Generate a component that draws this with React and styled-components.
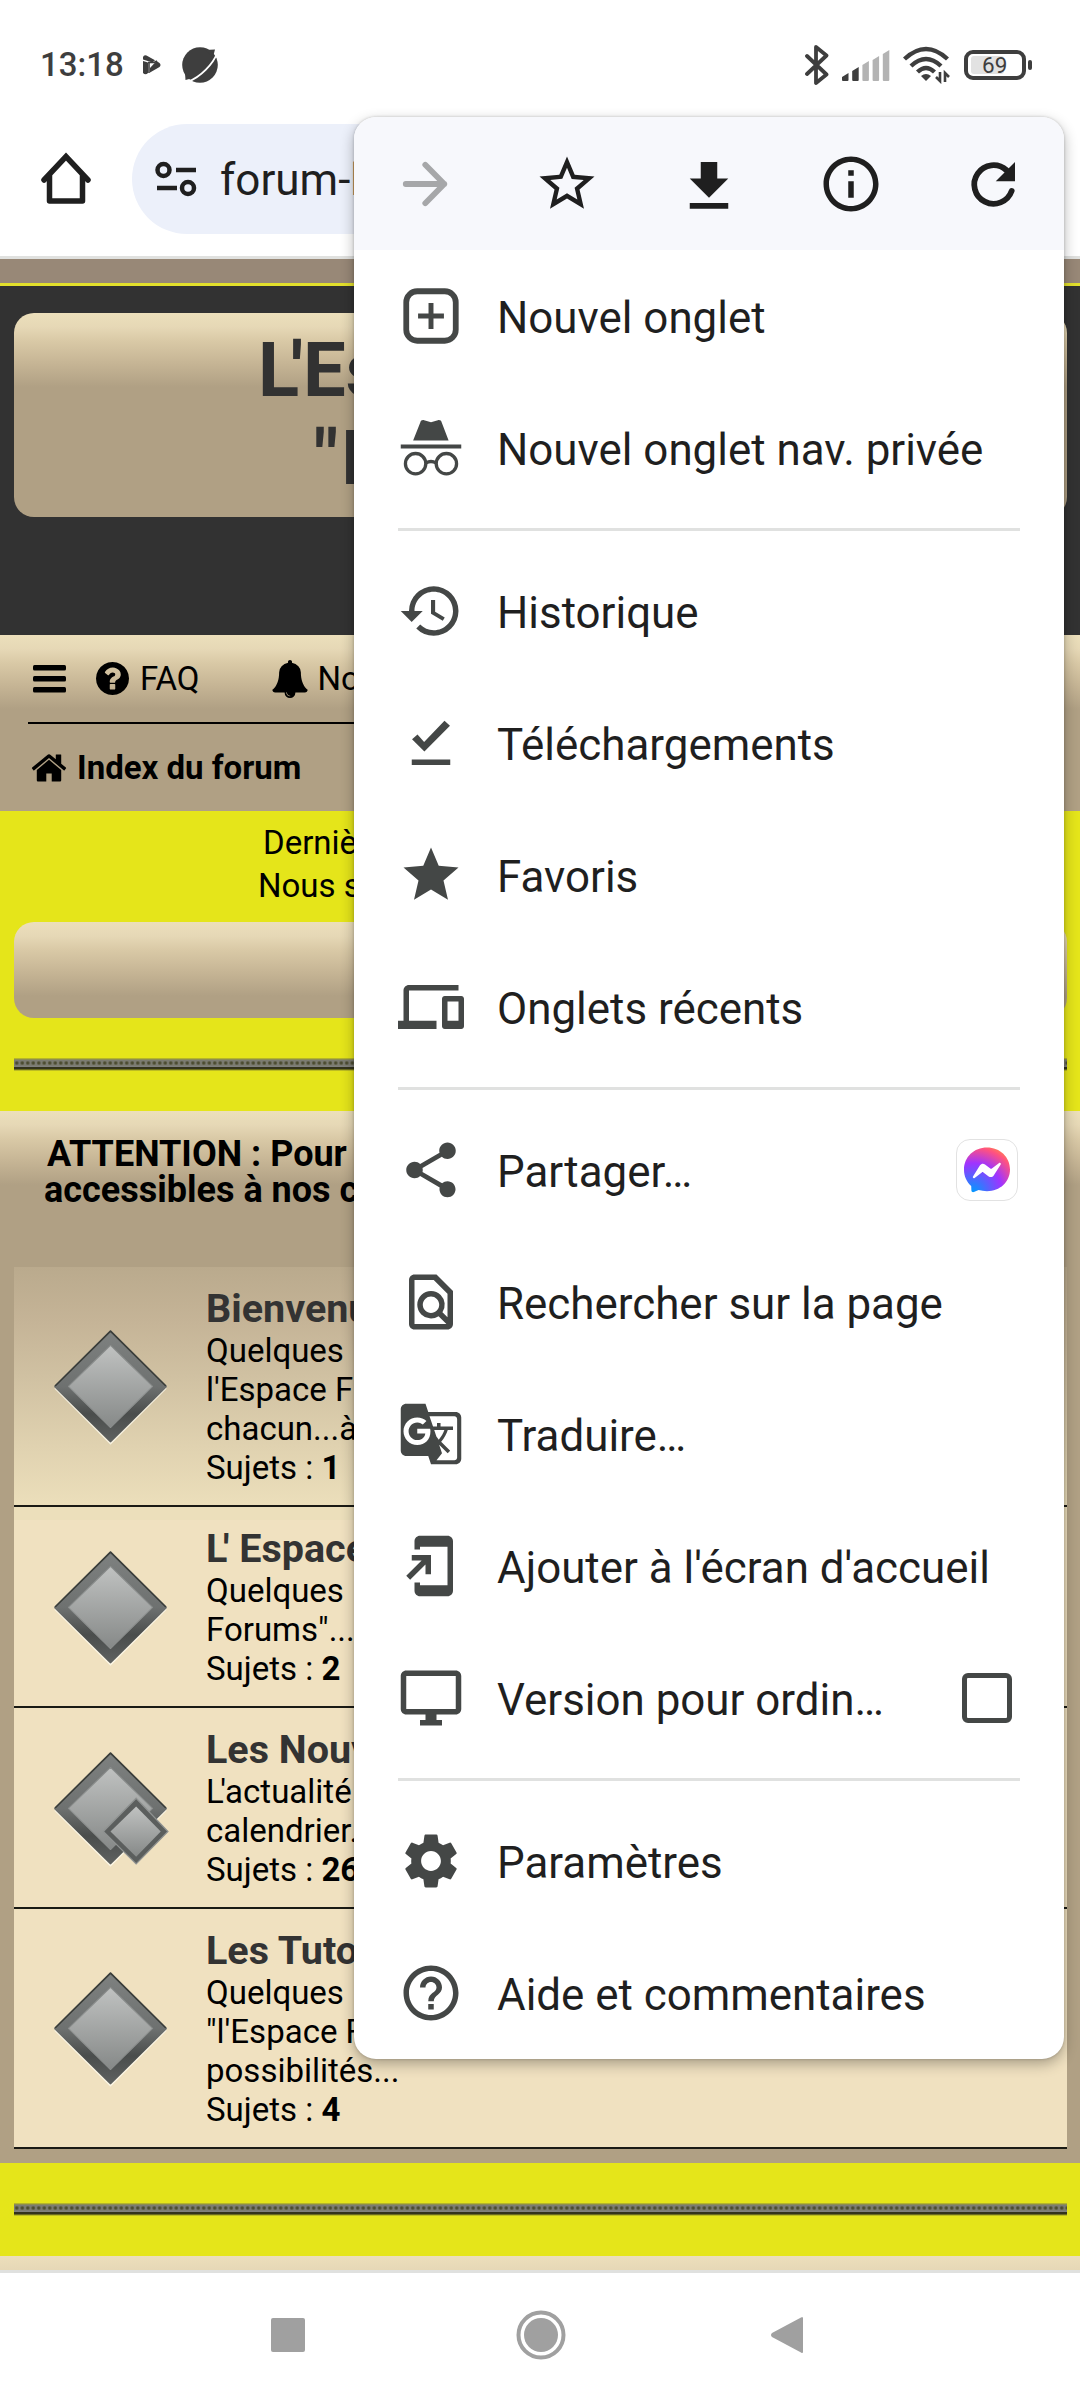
import React from "react";
import styled, { createGlobalStyle } from "styled-components";
import {
  MdAddToHomeScreen,
  MdDevices,
  MdGTranslate,
  MdHelpOutline,
  MdHistory,
  MdInfoOutline,
  MdOutlineDesktopWindows,
  MdOutlineFindInPage,
  MdSettings,
  MdShare,
  MdStar,
  MdStarOutline
} from "react-icons/md";

const GlobalStyle = createGlobalStyle`
  * {
    box-sizing: border-box;
  }
  body {
    margin: 0;
    background: #fff;
    font-family: Roboto, "Liberation Sans", sans-serif;
  }
  svg {
    display: block;
    flex: none;
  }
`;

const sheen = `linear-gradient(
  #ecdfbb 0,
  #e6d8b6 14px,
  #d9c9a6 28px,
  #c6b595 50px,
  #b0a084 74px,
  #b0a084 100%
)`;

const Screen = styled.div`
  position: relative;
  display: flex;
  flex-direction: column;
  width: 1080px;
  height: 2400px;
  overflow: hidden;
  background: #fff;
`;

/* ---- android status bar ---- */

const StatusBar = styled.div`
  display: flex;
  align-items: center;
  height: 108px;
  padding: 21px 48px 0 40px;
  color: #3e3e3e;
`;

const Clock = styled.span`
  width: 103px;
  margin-top: 1px;
  font-size: 33px;
  font-weight: 500;
  line-height: 40px;
  color: #3e3e3e;
`;

const StatusIcons = styled.div`
  display: flex;
  align-items: center;
  gap: ${props => props.gap}px;
`;

const Battery = styled.div`
  display: flex;
  align-items: center;
  margin-left: 13px;
`;

const BatteryCase = styled.div`
  width: 62px;
  height: 30px;
  padding: 2px 3px;
  border: 4px solid #3e3e3e;
  border-radius: 9px;
`;

const BatteryFill = styled.div`
  width: ${props => props.level}%;
  height: 18px;
  border-radius: 3px;
  background: #e2e2e2;
  color: #3e3e3e;
  font-size: 22.5px;
  line-height: 19px;
  text-indent: 11px;
  white-space: nowrap;
`;

const BatteryNub = styled.div`
  width: 4px;
  height: 10px;
  margin-left: 2px;
  border-radius: 2px;
  background: #3e3e3e;
`;

/* ---- browser toolbar ---- */

const Toolbar = styled.div`
  display: flex;
  align-items: center;
  height: 151px;
  padding: 0 16px 6px 33px;
  border-bottom: 3px solid #e0e1df;
`;

const AddressPill = styled.div`
  display: flex;
  align-items: center;
  flex: 1;
  height: 110px;
  margin-left: 33px;
  padding-left: 21px;
  border-radius: 55px;
  background: #ecf0fa;
`;

const Address = styled.span`
  margin-left: 23px;
  padding-top: 2px;
  font-size: 44px;
  color: #1f1f1f;
`;

/* ---- forum page ---- */

const Page = styled.div`
  display: flex;
  flex-direction: column;
  height: 2011px;
  overflow: hidden;
  font-size: 33px;
  color: #000;
`;

const TopStrip = styled.div`
  height: 27px;
  background: #988877;
  border-bottom: 3px solid #e3e02c;
`;

const Header = styled.div`
  height: 349px;
  padding: 27px 13px 0 14px;
  background: #323232;
`;

const TitleCard = styled.h1`
  height: 204px;
  margin: 0;
  padding-top: 13px;
  border-radius: 20px;
  background: ${sheen};
  font-size: 76px;
  font-weight: 700;
  line-height: 88px;
  color: #323232;
  white-space: nowrap;
  overflow: hidden;
`;

const TitleLine = styled.div`
  padding-left: ${props => props.indent}px;
`;

/* pulls the next glyph closer, as in L' */
const Kern = styled.span`
  letter-spacing: ${props => props.by}em;
`;

const NavPanel = styled.div`
  height: 176px;
  padding: 0 28px;
  background: ${sheen};
`;

const NavRow = styled.div`
  display: flex;
  align-items: center;
  height: 87px;
  padding-left: 5px;
`;

const Breadcrumb = styled(NavRow)`
  height: 89px;
  padding-left: 2px;
  border-top: 2px solid #000;
  font-weight: 700;
`;

const NavLink = styled.span`
  display: flex;
  align-items: center;
  gap: ${props => props.gap}px;
  margin-left: ${props => props.before || 0}px;
`;

const YellowBand = styled.div`
  padding: ${props => (props.notice ? "10px" : "0")} 13px 0 14px;
  height: ${props => props.h}px;
  background: #e5e51a;
`;

const NoticeLine = styled.div`
  padding-left: ${props => props.indent}px;
  line-height: 43px;
  white-space: nowrap;
`;

const EmptyCard = styled.div`
  height: 96px;
  margin-top: 15px;
  border-radius: 20px;
  background: ${sheen};
`;

const Rope = styled.div`
  height: 13px;
  margin-top: 40px;
  background: linear-gradient(
    #b5b52c 0 1px,
    #8d8d50 1px 2px,
    #7c7c72 2px 8px,
    #80807c 8px 9px,
    #33331c 9px 11px,
    #6b6b1c 11px 12px,
    #bcbc22 12px 13px
  );

  &::before {
    content: "";
    display: block;
    height: 7px;
    background: radial-gradient(circle at 50% 5px, #4c4c30 0 1px, transparent 2.4px);
    background-size: 5.5px 7px;
  }
`;

const ForumPanel = styled.div`
  height: 1052px;
  padding: 25px 13px 0 14px;
  background: ${sheen};
`;

const Warning = styled.h2`
  height: 131px;
  margin: 0;
  font-size: 36px;
  font-weight: 700;
  line-height: 36px;
  white-space: nowrap;
`;

const WarningLine = styled.div`
  padding-left: ${props => props.indent}px;
`;

const ForumList = styled.div`
  background: linear-gradient(
    #baaa8d 0,
    #c5b497 55px,
    #d0c1a2 110px,
    #e0d2b0 180px,
    #ecdfbb 240px,
    #ecdfbb 253px,
    #f0e1c0 253px
  );
`;

const ForumRow = styled.div`
  display: flex;
  align-items: center;
  height: ${props => props.h}px;
  border-bottom: 2px solid #1a1a14;
`;

const ForumIcon = styled.div`
  width: 192px;
  padding: 3px 0 0 37px;
`;

const ForumText = styled.div`
  align-self: flex-start;
  padding-top: 19px;
  line-height: 39px;
  white-space: nowrap;
`;

const ForumTitle = styled.div`
  font-size: 39.5px;
  font-weight: 700;
  line-height: 45px;
  color: #333;
`;

const FooterPanel = styled.div`
  flex: 1;
  background: ${sheen};
`;

/* ---- android navigation ---- */

const SystemNav = styled.div`
  display: flex;
  align-items: center;
  flex: 1;
  padding-bottom: 4px;
  border-top: 3px solid #e0e1df;
`;

const NavKey = styled.div`
  margin-left: ${props => props.before}px;
`;

/* ---- overflow menu ---- */

const Menu = styled.div`
  position: absolute;
  top: 117px;
  left: 354px;
  width: 710px;
  border-radius: 22px;
  background: #fff;
  box-shadow: 0 5px 14px rgba(0, 0, 0, 0.3), 0 0 3px rgba(0, 0, 0, 0.2);
  overflow: hidden;
`;

const MenuActions = styled.div`
  display: flex;
  height: 133px;
  background: #f7f8fc;
`;

const Action = styled.div`
  display: flex;
  flex: 1;
  align-items: center;
  justify-content: center;
  color: ${props => (props.disabled ? "#a6a7a9" : "#1f1f1f")};
`;

const MenuItem = styled.div`
  display: flex;
  align-items: center;
  height: 132px;
  padding: 0 44px;
  color: #444746;
`;

const MenuLabel = styled.span`
  flex: 1;
  padding: 4px 0 0 33px;
  font-size: 43.9px;
  color: #1f1f1f;
  white-space: nowrap;
`;

const Divider = styled.div`
  height: 3px;
  margin: 14px 44px;
  background: #e0e1e0;
`;

const ShareTarget = styled.div`
  display: flex;
  align-items: center;
  justify-content: center;
  width: 62px;
  height: 62px;
  margin-right: 2px;
  border: 1px solid #e2e2e2;
  border-radius: 14px;
`;

const Checkbox = styled.div`
  width: 50px;
  height: 50px;
  margin-right: 8px;
  border: 5.5px solid #444746;
  border-radius: 6px;
`;

const Glyph = ({ children, size = 66, box = 24, ...rest }) => (
  <svg width={size} height={size} viewBox={`0 0 ${box} ${box}`} fill="currentColor" {...rest}>
    {children}
  </svg>
);

const ForwardIcon = () => (
  <Glyph fill="none" stroke="currentColor" strokeWidth="2.1" strokeLinecap="round" strokeLinejoin="round">
    <path d="M5 12h14M12.1 5l6.9 7-6.9 7" />
  </Glyph>
);

const DownloadIcon = () => (
  <Glyph>
    <path d="M19 10h-4V4H9v6H5l7 7zM5 18.9h14V21H5z" />
  </Glyph>
);

const ReloadIcon = () => (
  <Glyph>
    <path
      d="M18.8 14.5A7 7 0 1 1 16.9 7"
      fill="none"
      stroke="currentColor"
      strokeWidth="2.1"
      strokeLinecap="round"
    />
    <path d="M20 4v7h-7z" />
  </Glyph>
);

const NewTabIcon = () => (
  <Glyph>
    <rect x="3" y="3" width="18" height="18" rx="4" fill="none" stroke="currentColor" strokeWidth="2.1" />
    <path d="M11.1 7.3h1.8v3.8h3.8v1.8h-3.8v3.8h-1.8v-3.8H7.3v-1.8h3.8z" />
  </Glyph>
);

const IncognitoIcon = () => (
  <Glyph>
    <path d="M8.1 2.7c.2-.7.7-1 1.4-.8l2.5.7 2.5-.7c.7-.2 1.2.1 1.4.8L18.4 9.3H5.5z" />
    <path d="M1 10.7h22v1.5H1z" />
    <g fill="none" stroke="currentColor" strokeWidth="1.2">
      <circle cx="6.4" cy="17.7" r="3.7" />
      <circle cx="17.6" cy="17.7" r="3.7" />
      <path d="M10.1 17.5c1.1-.7 2.700-.7 3.800 0" />
    </g>
  </Glyph>
);

const DoneIcon = () => (
  <Glyph>
    <path d="M5.1 10.6 7.1 8.900l2.400 2.700L16.900 3.900l2 1.800-9.300 9.400zM5 18h14v2H5z" />
  </Glyph>
);

const HomeIcon = () => (
  <Glyph box={66} fill="none" stroke="#1f1f1f" strokeWidth="5.5" strokeLinecap="round" strokeLinejoin="round">
    <path d="M11 34 33 10.500 55 34" strokeLinejoin="miter" />
    <path d="M16.500 30v25h33V30" />
  </Glyph>
);

const TuneIcon = () => (
  <svg width="44" height="36" viewBox="0 0 44 36" fill="none" stroke="#1f1f1f" strokeWidth="4.5">
    <circle cx="10.500" cy="9" r="6" />
    <path d="M23 9h20M4 27h20" />
    <circle cx="35" cy="27" r="6" />
  </svg>
);

const PlayIcon = () => (
  <svg width="18" height="20" viewBox="0 0 18 20" fill="#3e3e3e">
    <path d="M0 2Q1-.5 3.500.6L12 5.200 9.500 7.500 0 4.500zM0 6l5 1.500V18q-2.500 2.500-5 0zM13.500 6l3 2q2 2 0 4L7 17.500V13z" />
    <path d="M5 7.500h6l3-1.500M6 7v11" fill="none" stroke="#3e3e3e" strokeWidth="1.6" />
  </svg>
);

const PlanetIcon = () => (
  <svg width="38" height="38" viewBox="0 0 38 38">
    <circle cx="19" cy="19" r="17.8" fill="#3e3e3e" />
    <path d="M24 4 34 3.500 32 11zM4 27 4.500 34 12 32z" fill="#3e3e3e" />
    <path d="M36.500 6.500C32 18 20 31 6.500 36" fill="none" stroke="#fff" strokeWidth="1.900" />
  </svg>
);

const BluetoothIcon = () => (
  <svg width="24" height="40" viewBox="0 0 24 40" fill="none" stroke="#3e3e3e" strokeWidth="3.8" strokeLinejoin="round" strokeLinecap="round">
    <path d="M2 11l19.500 18.500L11 38V2l10.500 8.500L2 29" />
  </svg>
);

const SIGNAL = [8, 14, 20, 25, 31];

const SignalIcon = () => (
  <svg width="48" height="32" viewBox="0 0 48 32">
    {SIGNAL.map((h, i) => (
      <path
        key={h}
        d={`M${i * 10.2} 31V${36 - h}l6.5-4V31q0 1-1 1h-4.5q-1 0-1-1z`}
        fill={i < 2 ? "#3e3e3e" : "#b3b3b3"}
      />
    ))}
  </svg>
);

const WifiIcon = () => (
  <svg width="48" height="38" viewBox="0 0 48 38" fill="none" stroke="#3e3e3e" strokeWidth="4.4">
    <path d="M1.500 13q21.500-20 43 0M8 20q15-14 30 0M14.500 26q8.500-8 17 0" />
    <path d="M18 30q5-4 10 0l-5 5z" fill="#3e3e3e" stroke="none" />
    <path d="M37 26v9l-4-4M42 36v-9l4 4" strokeWidth="2.6" />
  </svg>
);

const BarsIcon = () => (
  <svg width="33" height="28" viewBox="0 0 33 28">
    <rect width="33" height="5.500" rx="1.500" />
    <rect y="11" width="33" height="5.500" rx="1.500" />
    <rect y="22" width="33" height="5.500" rx="1.500" />
  </svg>
);

const QuestionIcon = () => (
  <svg width="33" height="33" viewBox="128 128 1536 1536">
    <path d="M1024 1376v-192q0-14-9-23t-23-9h-192q-14 0-23 9t-9 23v192q0 14 9 23t23 9h192q14 0 23-9t9-23zm256-672q0-88-55.500-163t-138.500-116-170-41q-243 0-371 213-15 24 8 42l132 100q7 6 19 6 16 0 25-12 53-68 86-92 34-24 86-24 48 0 85.500 26t37.500 59q0 38-20 61t-68 45q-63 28-115.500 86.500t-52.500 125.500v36q0 14 9 23t23 9h192q14 0 23-9t9-23q0-19 21.500-49.500t54.500-49.500q32-18 49-28.500t46-35 44.500-48 28-60.500 12.500-81zm384 192q0 209-103 385.500t-279.500 279.500-385.500 103-385.500-103-279.500-279.500-103-385.500 103-385.500 279.500-279.500 385.500-103 385.500 103 279.500 279.500 103 385.500z" />
  </svg>
);

const BellIcon = () => (
  <svg width="38" height="38" viewBox="0 0 1792 1792">
    <path d="M912 1696q0-16-16-16-59 0-101.500-42.500t-42.500-101.500q0-16-16-16t-16 16q0 73 51.500 124.500t124.500 51.500q16 0 16-16zm816-288q0 52-38 90t-90 38h-448q0 106-75 181t-181 75-181-75-75-181h-448q-52 0-90-38t-38-90q50-42 91-88t85-119.500 74.500-158.500 50-206 19.500-260q0-152 117-282.500t307-158.500q-8-19-8-39 0-40 28-68t68-28 68 28 28 68q0 20-8 39 190 28 307 158.500t117 282.500q0 139 19.500 260t50 206 74.500 158.500 85 119.500 91 88z" />
  </svg>
);

const HouseIcon = () => (
  <svg width="38" height="38" viewBox="0 0 1792 1792">
    <path d="M1472 992v480q0 26-19 45t-45 19h-384v-384h-256v384h-384q-26 0-45-19t-19-45v-480q0-1 .5-3t.5-3l575-474 575 474q1 2 1 6zm223-69l-62 74q-8 9-21 11h-3q-13 0-21-7l-692-577-692 577q-12 8-24 7-13-2-21-11l-62-74q-8-10-7-23.500t11-21.500l719-599q32-26 76-26t76 26l244 204v-195q0-14 9-23t23-9h192q14 0 23 9t9 23v408l219 182q10 8 11 21.500t-7 23.500z" />
  </svg>
);

const MessengerIcon = () => (
  <svg width="48" height="48" viewBox="0 0 48 48">
    <defs>
      <radialGradient id="bubble" cx="0.19" cy="0.995" r="1.08">
        <stop offset="0" stopColor="#0099ff" />
        <stop offset="0.6" stopColor="#a033ff" />
        <stop offset="0.92" stopColor="#ff5280" />
        <stop offset="1" stopColor="#ff7061" />
      </radialGradient>
    </defs>
    <path
      d="M24 1.500C11 1.500 1 11 1 23.700c0 6.600 2.700 12.300 7.200 16.200l.2 4.600c.1 1.300 1.300 2.100 2.500 1.600l4.700-2c2.600.7 5.400 1.100 8.400 1.100 13 0 23-9.300 23-21.700S37 1.500 24 1.500z"
      fill="url(#bubble)"
    />
    <path
      d="M10 30.500l7-11.200c1.100-1.700 3.400-2.100 5-.9l5.300 4c.5.4 1.100.4 1.600 0l7.200-5.500c1-.7 2.200.4 1.600 1.500l-7 11.100c-1.100 1.700-3.400 2.100-5 .9l-5.300-4c-.5-.4-1.100-.4-1.600 0l-7.200 5.500c-1 .8-2.300-.4-1.600-1.400z"
      fill="#fff"
    />
  </svg>
);

const Diamond = ({ subforum }) => (
  <svg width="119" height="119" viewBox="0 0 116 116">
    <defs>
      <linearGradient id="frame" x1="0" y1="0" x2="0" y2="1">
        <stop offset="0" stopColor="#7e8180" />
        <stop offset="0.5" stopColor="#6e7170" />
        <stop offset="0.75" stopColor="#4a4d4c" />
        <stop offset="1" stopColor="#5e6160" />
      </linearGradient>
      <linearGradient id="face" x1="0" y1="0" x2="0" y2="1">
        <stop offset="0" stopColor="#c0c2c1" />
        <stop offset="1" stopColor="#868988" />
      </linearGradient>
    </defs>
    <path d="M4 58.500 58 112.500 112 58.500" fill="none" stroke="#fffdf4" strokeWidth="2" opacity="0.7" />
    <path
      d="M58 3.500 112 57 58 110.500 4 57z"
      fill="url(#frame)"
      stroke="url(#frame)"
      strokeWidth="2"
      strokeLinejoin="round"
    />
    <path d="M4 56.500 58 3 112 56.500" fill="none" stroke="#3a3d39" strokeWidth="1.600" strokeLinejoin="round" />
    <path d="M58 17 99 57 58 97 17 57z" fill="url(#face)" stroke="#8b8e8d" strokeWidth="1" strokeLinejoin="round" />
    {subforum && (
      <g>
        <path d="M83 47 114 79.500 83 111 51 79.500z" fill="#5b5e5d" stroke="#8f9291" strokeWidth="1.200" />
        <path d="M83 55 107 79.500 83 104 58 79.500z" fill="url(#face)" />
      </g>
    )}
  </svg>
);

const withKern = text =>
  text.startsWith("L'") ? (
    <>
      <Kern by={-0.11}>L</Kern>
      {text.slice(1)}
    </>
  ) : (
    text
  );

const FORUMS = [
  { title: "Bienvenue", lines: ["Quelques", "l'Espace F", "chacun...à"], count: 1, h: 240 },
  { title: "L' Espace", lines: ["Quelques", "Forums\"..."], count: 2, h: 201 },
  { title: "Les Nouv", lines: ["L'actualité", "calendrier..."], count: 26, h: 201, subforum: true },
  { title: "Les Tuto", lines: ["Quelques", "\"l'Espace F", "possibilités..."], count: 4, h: 240 }
];

const MENU = [
  [
    { icon: <NewTabIcon />, label: "Nouvel onglet" },
    { icon: <IncognitoIcon />, label: "Nouvel onglet nav. privée" }
  ],
  [
    { icon: <MdHistory size={66} />, label: "Historique" },
    { icon: <DoneIcon />, label: "Téléchargements" },
    { icon: <MdStar size={66} />, label: "Favoris" },
    { icon: <MdDevices size={66} />, label: "Onglets récents" }
  ],
  [
    {
      icon: <MdShare size={66} />,
      label: "Partager…",
      end: (
        <ShareTarget>
          <MessengerIcon />
        </ShareTarget>
      )
    },
    { icon: <MdOutlineFindInPage size={66} />, label: "Rechercher sur la page" },
    { icon: <MdGTranslate size={66} />, label: "Traduire…" },
    { icon: <MdAddToHomeScreen size={66} />, label: "Ajouter à l'écran d'accueil" },
    { icon: <MdOutlineDesktopWindows size={66} />, label: "Version pour ordin…", end: <Checkbox /> }
  ],
  [
    { icon: <MdSettings size={66} />, label: "Paramètres" },
    { icon: <MdHelpOutline size={66} />, label: "Aide et commentaires" }
  ]
];

const Forum = () => (
  <Page>
    <TopStrip />
    <Header>
      <TitleCard>
        <TitleLine indent={244}>{withKern("L'Espace")}</TitleLine>
        <TitleLine indent={300}>
          <Kern by={0.04}>"</Kern>F
        </TitleLine>
      </TitleCard>
    </Header>
    <NavPanel>
      <NavRow>
        <BarsIcon />
        <NavLink before={30} gap={11}>
          <QuestionIcon />
          FAQ
        </NavLink>
        <NavLink before={71} gap={9}>
          <BellIcon />
          No
        </NavLink>
      </NavRow>
      <Breadcrumb>
        <NavLink gap={9}>
          <HouseIcon />
          Index du forum
        </NavLink>
      </Breadcrumb>
    </NavPanel>
    <YellowBand notice h={300}>
      <NoticeLine indent={249}>Dernière</NoticeLine>
      <NoticeLine indent={244}>Nous s</NoticeLine>
      <EmptyCard />
      <Rope />
    </YellowBand>
    <ForumPanel>
      <Warning>
        <WarningLine indent={33}>ATTENTION : Pour</WarningLine>
        <WarningLine indent={30}>accessibles à nos c</WarningLine>
      </Warning>
      <ForumList>
        {FORUMS.map(forum => (
          <ForumRow key={forum.title} h={forum.h}>
            <ForumIcon>
              <Diamond subforum={forum.subforum} />
            </ForumIcon>
            <ForumText>
              <ForumTitle>{withKern(forum.title)}</ForumTitle>
              {forum.lines.map(line => (
                <div key={line}>{withKern(line)}</div>
              ))}
              <div>
                Sujets : <b>{forum.count}</b>
              </div>
            </ForumText>
          </ForumRow>
        ))}
      </ForumList>
    </ForumPanel>
    <YellowBand h={93}>
      <Rope />
    </YellowBand>
    <FooterPanel />
  </Page>
);

const OverflowMenu = () => (
  <Menu>
    <MenuActions>
      <Action disabled>
        <ForwardIcon />
      </Action>
      <Action>
        <MdStarOutline size={66} />
      </Action>
      <Action>
        <DownloadIcon />
      </Action>
      <Action>
        <MdInfoOutline size={66} />
      </Action>
      <Action>
        <ReloadIcon />
      </Action>
    </MenuActions>
    {MENU.map((group, i) => (
      <React.Fragment key={i}>
        {i > 0 && <Divider />}
        {group.map(item => (
          <MenuItem key={item.label}>
            {item.icon}
            <MenuLabel>{item.label}</MenuLabel>
            {item.end}
          </MenuItem>
        ))}
      </React.Fragment>
    ))}
  </Menu>
);

const Spring = styled.div`
  flex: 1;
`;

export default function App() {
  return (
    <Screen>
      <GlobalStyle />
      <StatusBar>
        <Clock>13:18</Clock>
        <StatusIcons gap={20}>
          <PlayIcon />
          <PlanetIcon />
        </StatusIcons>
        <Spring />
        <StatusIcons gap={13}>
          <BluetoothIcon />
          <SignalIcon />
          <WifiIcon />
        </StatusIcons>
        <Battery>
          <BatteryCase>
            <BatteryFill level={69}>69</BatteryFill>
          </BatteryCase>
          <BatteryNub />
        </Battery>
      </StatusBar>
      <Toolbar>
        <HomeIcon />
        <AddressPill>
          <TuneIcon />
          <Address>forum-l</Address>
        </AddressPill>
      </Toolbar>
      <Forum />
      <SystemNav>
        <NavKey before={271}>
          <svg width="34" height="34" viewBox="0 0 34 34">
            <rect width="34" height="34" rx="2" fill="#a0a0a0" />
          </svg>
        </NavKey>
        <NavKey before={211}>
          <svg width="50" height="50" viewBox="0 0 50 50">
            <circle cx="25" cy="25" r="22.500" fill="none" stroke="#a0a0a0" strokeWidth="4" />
            <circle cx="25" cy="25" r="17" fill="#a0a0a0" />
          </svg>
        </NavKey>
        <NavKey before={204}>
          <svg width="34" height="38" viewBox="0 0 34 38">
            <path d="M31 1.500q2-1.500 2 1v33q0 2.500-2 1L2 21q-2-2 0-4z" fill="#a0a0a0" />
          </svg>
        </NavKey>
      </SystemNav>
      <OverflowMenu />
    </Screen>
  );
}
